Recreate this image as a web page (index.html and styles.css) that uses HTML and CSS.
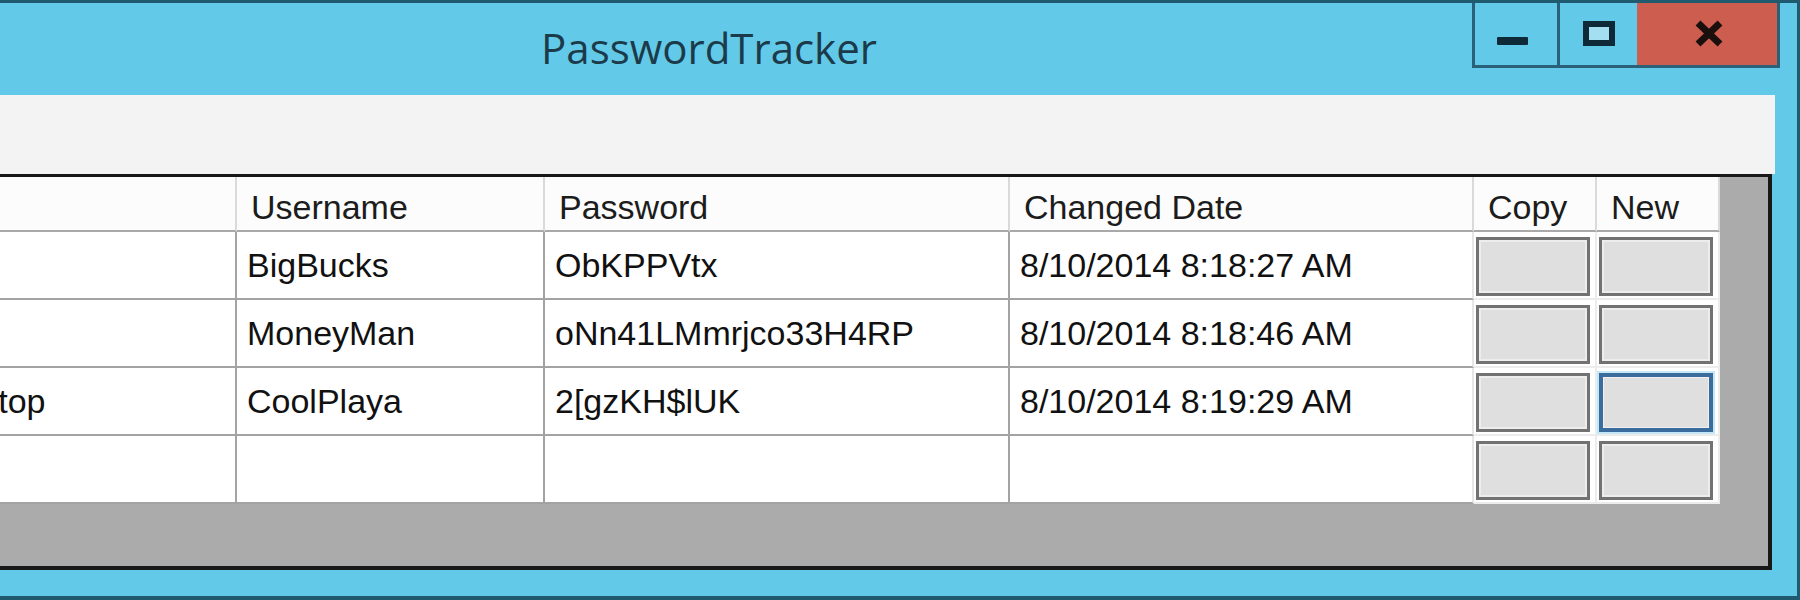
FILE: index.html
```html
<!DOCTYPE html>
<html lang="en">
<head>
    <meta charset="UTF-8">
    <meta name="viewport" content="width=device-width, initial-scale=1.0">
    <title>PasswordTracker</title>
    <link rel="stylesheet" href="styles.css">
</head>
<body>
    <div class="window">
        <div class="titlebar">
            <div class="title">PasswordTracker</div>
            <div class="caption-buttons">
                <div class="cap-btn cap-min">
                    <svg width="82" height="62"><rect x="22" y="34" width="31" height="8" rx="1" fill="#0e2a38"/></svg>
                </div>
                <div class="cap-btn cap-max">
                    <svg width="77" height="62"><rect x="26" y="21" width="26" height="19" fill="#a4dff1" stroke="#0e2a38" stroke-width="6"/></svg>
                </div>
                <div class="cap-btn cap-close">
                    <svg width="140" height="62"><path d="M61 20 L83 41 M83 20 L61 41" stroke="#1a0f0d" stroke-width="7" fill="none"/></svg>
                </div>
            </div>
        </div>

        <div class="client">
            <!-- empty menu strip -->
            <div class="menustrip"></div>

            <div class="grid">
                <table class="rows">
                    <thead>
                        <tr>
                            <th class="c-head"></th>
                            <th class="c-site"></th>
                            <th class="c-user">Username</th>
                            <th class="c-pass">Password</th>
                            <th class="c-date">Changed Date</th>
                            <th class="c-btn">Copy</th>
                            <th class="c-btn">New</th>
                        </tr>
                    </thead>
                    <tbody>
                        <tr>
                            <td class="row-head"></td>
                            <td></td>
                            <td>BigBucks</td>
                            <td>ObKPPVtx</td>
                            <td class="date">8/10/2014 8:18:27 AM</td>
                            <td class="btn-cell"><button class="cell-btn"></button></td>
                            <td class="btn-cell"><button class="cell-btn"></button></td>
                        </tr>
                        <tr>
                            <td class="row-head"></td>
                            <td></td>
                            <td>MoneyMan</td>
                            <td>oNn41LMmrjco33H4RP</td>
                            <td class="date">8/10/2014 8:18:46 AM</td>
                            <td class="btn-cell"><button class="cell-btn"></button></td>
                            <td class="btn-cell"><button class="cell-btn"></button></td>
                        </tr>
                        <tr>
                            <td class="row-head"></td>
                            <td>Gaming Laptop</td>
                            <td>CoolPlaya</td>
                            <td>2[gzKH$lUK</td>
                            <td class="date">8/10/2014 8:19:29 AM</td>
                            <td class="btn-cell"><button class="cell-btn"></button></td>
                            <td class="btn-cell"><button class="cell-btn focused"></button></td>
                        </tr>
                        <tr>
                            <td class="row-head"></td>
                            <td></td>
                            <td></td>
                            <td></td>
                            <td class="date"></td>
                            <td class="btn-cell"><button class="cell-btn"></button></td>
                            <td class="btn-cell"><button class="cell-btn"></button></td>
                        </tr>
                    </tbody>
                </table>
            </div>
        </div>
    </div>
</body>
</html>
```

FILE: styles.css
```css
* {
    box-sizing: border-box;
}
body {
    margin: 0;
    overflow: hidden;
    background: #1f5a6f;
    font-family: "Liberation Sans", Arial, sans-serif;
}
/* window is dragged partly off the left edge of the screen */
.window {
    margin-left: -382px;
    width: 2182px;
    height: 600px;
    background: #63c9e8;
    border: 3px solid #1f5a6f;
    border-bottom-width: 4px;
    display: flex;
    flex-direction: column;
}
.titlebar {
    flex: none;
    height: 92px;
    display: grid;
    grid-template-columns: 1fr auto 1fr;
}
.title {
    grid-column: 2;
    align-self: center;
    font-family: "Open Sans", "Noto Sans", sans-serif;
    font-size: 42px;
    color: #1b3b4a;
    margin-top: -4px;
}
.caption-buttons {
    grid-column: 3;
    justify-self: end;
    align-self: start;
    display: flex;
    height: 65px;
    margin-right: 17px;
    border: 3px solid #2a6179;
    border-top: 0;
}
.cap-btn {
    height: 62px;
}
.cap-btn svg {
    display: block;
}
.cap-min {
    width: 82px;
}
.cap-max {
    width: 80px;
    border-left: 3px solid #2a6179;
}
.cap-close {
    width: 140px;
    background: #cd5e4f;
}
.client {
    flex: 1;
    display: flex;
    flex-direction: column;
    margin: 0 22px 26px 20px;
}
.menustrip {
    flex: none;
    height: 79px;
    background: #f3f3f3;
}
.grid {
    flex: 1;
    margin: 0 3px;
    background: #ababab;
    border: 3px solid #181818;
    border-right-width: 4px;
    border-bottom-width: 4px;
    overflow: hidden;
}
.rows {
    table-layout: fixed;
    width: 2073px;
    border-collapse: separate;
    border-spacing: 0;
    font-size: 34px;
    color: #111;
}
.rows th {
    height: 55px;
    padding: 8px 14px 0;
    text-align: left;
    font-weight: normal;
    color: #1c1c1c;
    background: #fcfcfc;
    border-right: 2px solid #dadada;
    border-bottom: 2px solid #a9a9a9;
    white-space: nowrap;
    overflow: hidden;
}
.rows td {
    height: 68px;
    padding: 0 10px;
    background: #fff;
    border-right: 2px solid #a3a3a3;
    border-bottom: 2px solid #a3a3a3;
    white-space: nowrap;
    overflow: hidden;
}
.c-head { width: 156px; }
.c-site { width: 434px; }
.c-user { width: 308px; }
.c-pass { width: 465px; }
.c-date { width: 464px; }
.c-btn { width: 123px; }
.rows td.date {
    border-right-color: #e6e6e6;
}
.rows td.btn-cell {
    padding: 5px 5px 2px 2px;
    border-right-color: #ececec;
    border-bottom-color: #ececec;
}
.cell-btn {
    display: block;
    width: 100%;
    height: 59px;
    margin: 0;
    padding: 0;
    background: #dfdfdf;
    border: 3px solid #727272;
    box-shadow: inset 0 0 0 2px #ededed;
}
.cell-btn.focused {
    border: 4px solid #3a6d9d;
    box-shadow: 0 0 0 2px #c4e8f6, inset 0 0 0 1px #f0f0f0;
}
```
